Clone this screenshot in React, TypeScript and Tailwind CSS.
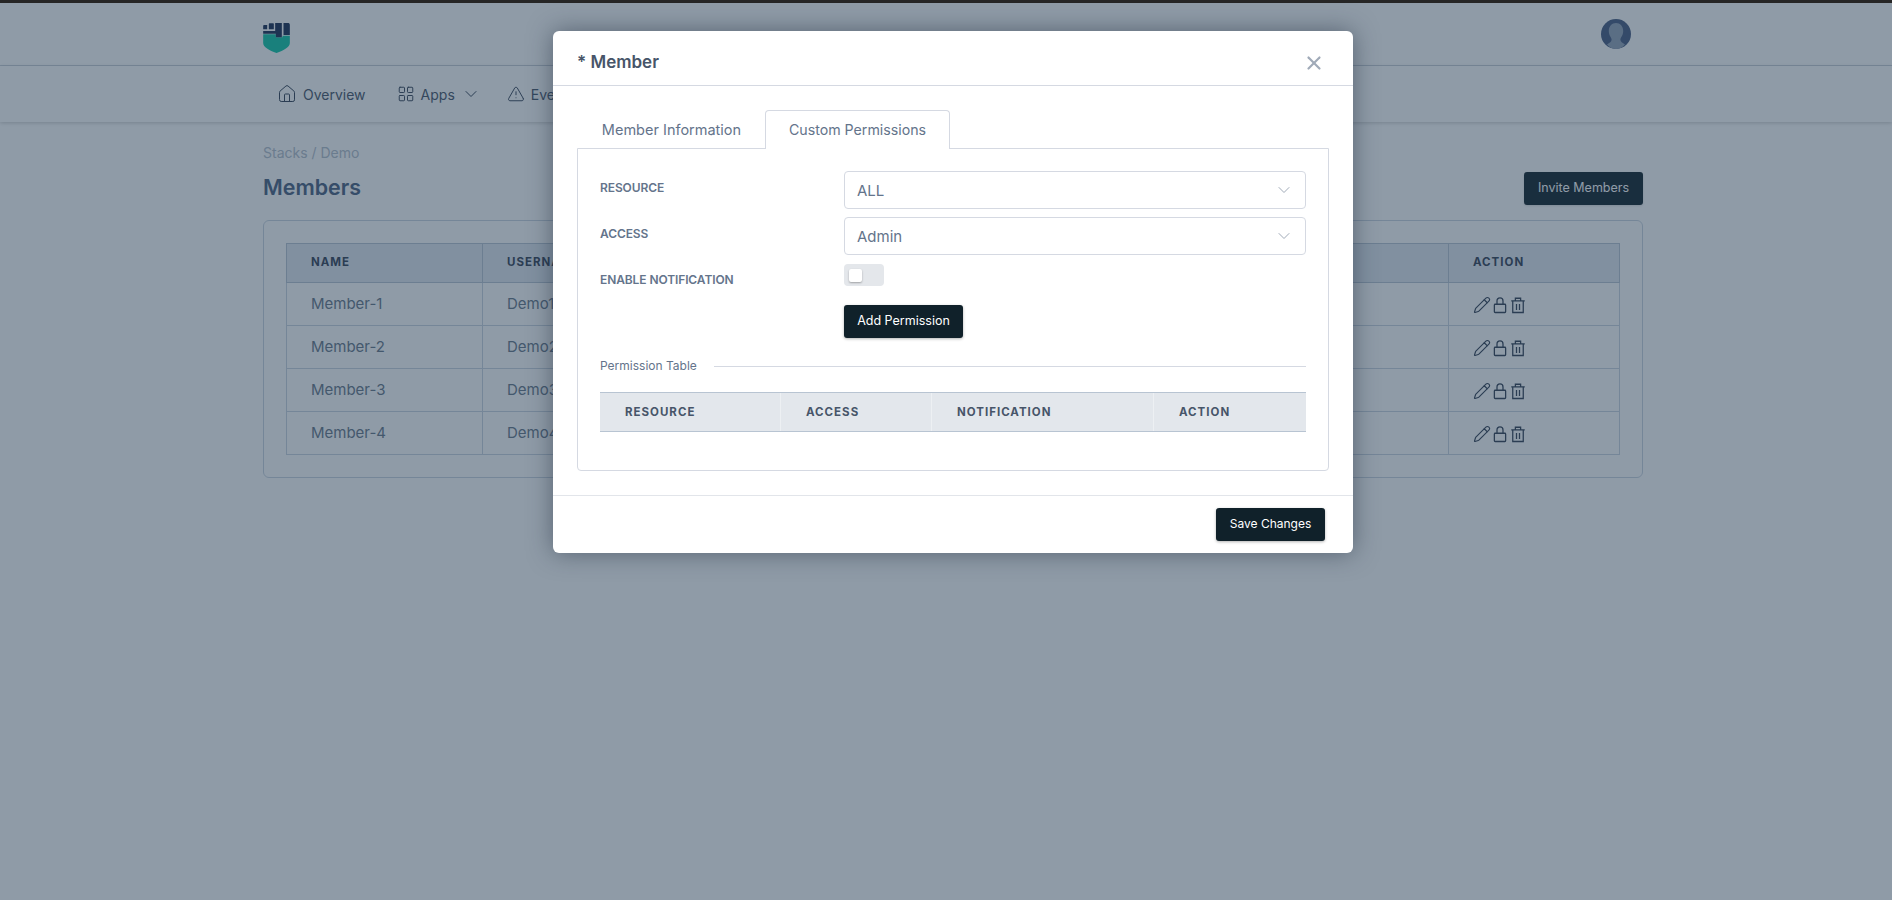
import React from "react";
import { ChevronDown, Home, LayoutGrid, Pencil, TriangleAlert, X } from "lucide-react";

const members = [
  { name: "Member-1", user: "Demo1" },
  { name: "Member-2", user: "Demo2" },
  { name: "Member-3", user: "Demo3" },
  { name: "Member-4", user: "Demo4" },
];

const permissionCols = [
  { label: "RESOURCE", width: "w-[181px]" },
  { label: "ACCESS", width: "w-[151px]" },
  { label: "NOTIFICATION", width: "w-[222px]" },
  { label: "ACTION", width: "w-[152px]" },
];

function Logo() {
  return (
    <svg width="27" height="30" viewBox="0 0 80 90">
      <path d="M0 34H46V24H38V43H58V38H80V60C80 72 62 83 40 90C18 83 0 72 0 60Z" fill="#10c8a8" />
      <path d="M0 9C0 7 2 6 4 6H12V19H0Z" fill="#182c52" />
      <rect x="17" y="1" width="15" height="18" rx="2" fill="#182c52" />
      <path d="M0 24H36V0H56V43H38V32H0Z" fill="#182c52" />
      <path d="M61 0H74C78 0 80 2 80 6V36H61Z" fill="#182c52" />
    </svg>
  );
}

function Avatar() {
  return (
    <svg width="30" height="30" viewBox="0 0 30 30">
      <circle cx="15" cy="15" r="15" fill="#465a80" />
      <path d="M15 4C10.8 4 7.8 7.5 7.8 12C7.8 16.5 10.5 18.5 10.6 20.5C10.7 22.5 8.5 24 6 25.5C8.5 28.5 12 30 15 30C18 30 21.5 28.5 24 25.5C21.5 24 19.3 22.5 19.4 20.5C19.5 18.5 22.2 16.5 22.2 12C22.2 7.5 19.2 4 15 4Z" fill="#94a3b8" />
    </svg>
  );
}

function LockIcon() {
  return (
    <svg width="18" height="18" viewBox="0 0 24 24" fill="none" stroke="currentColor" strokeWidth="1.7">
      <rect x="4.5" y="11" width="15" height="11" rx="1" />
      <path d="M8 11V6.5a4 4 0 0 1 8 0V11" />
    </svg>
  );
}

function TrashIcon() {
  return (
    <svg width="18" height="18" viewBox="0 0 24 24" fill="none" stroke="currentColor" strokeWidth="1.7">
      <path d="M3 6.5H21" />
      <path d="M8.5 6.5V3h7v3.5" />
      <path d="M5 6.5V22h14V6.5" />
      <path d="M10 10.5v8M14 10.5v8" />
    </svg>
  );
}

function SelectField({ value }: { value: string }) {
  return (
    <div className="flex h-[38px] items-center justify-between rounded-[4px] border border-[#d5d9e2] bg-white pl-[12px] pr-[11px] text-[15px] text-[#64748b]">
      <span className="pt-[2px]">{value}</span>
      <ChevronDown size={20} strokeWidth={1.2} className="text-[#a0aab8]" />
    </div>
  );
}

function FieldLabel({ children, top }: { children: React.ReactNode; top: string }) {
  return (
    <div className={`w-[244px] shrink-0 text-[12px] font-semibold leading-[18px] tracking-[-0.1px] text-[#64748b] ${top}`}>
      {children}
    </div>
  );
}

export default function App() {
  return (
    <div className="relative h-[900px] overflow-hidden bg-white font-['Inter',sans-serif]">
      <div className="h-[3px] bg-[#262626]" />

      <header className="flex h-[63px] items-start justify-between border-b border-[#d0d7df] pl-[263px] pr-[261px] pt-[20px]">
        <Logo />
        <div className="-mt-[4px]">
          <Avatar />
        </div>
      </header>

      <nav className="flex h-[56px] items-center gap-[31px] pl-[277px] text-[14px] text-[#475569] shadow-[0_1px_4px_rgba(0,0,0,0.2)]">
        <div className="flex items-center gap-[6px]">
          <Home size={20} strokeWidth={1.2} className="text-[#334155]" />
          <span>Overview</span>
        </div>
        <div className="flex items-center gap-[6px]">
          <LayoutGrid size={18} strokeWidth={1.3} className="text-[#334155]" />
          <span>Apps</span>
          <ChevronDown size={20} strokeWidth={1.2} className="-mr-[5px] text-[#334155]" />
        </div>
        <div className="flex items-center gap-[6px]">
          <TriangleAlert size={18} strokeWidth={1.3} className="text-[#334155]" />
          <span>Events</span>
        </div>
      </nav>

      <main className="ml-[263px] mt-[21px] w-[1380px]">
        <div className="text-[14px] leading-[20px] text-[#b4bfcc]">Stacks / Demo</div>
        <div className="mt-[9px] flex items-start justify-between">
          <h1 className="text-[21.4px] font-semibold leading-[30px] text-[#4a6080]">Members</h1>
          <button className="h-[33px] w-[119px] rounded-[3px] bg-[#10212a] text-[12.5px] text-white shadow-sm">
            Invite Members
          </button>
        </div>

        <div className="mt-[15px] rounded-[6px] border border-[#cbd5e1] p-[22px]">
          <table className="w-full table-fixed border-collapse text-[15px] text-[#677789]">
            <colgroup>
              <col className="w-[196px]" />
              <col />
              <col className="w-[171px]" />
            </colgroup>
            <thead>
              <tr className="h-[39px] bg-[#e2e8f0] text-left text-[11.5px] tracking-[1px] text-[#334155]">
                <th className="border border-[#b8c4d2] pl-[24px] font-bold">NAME</th>
                <th className="border border-[#b8c4d2] pl-[24px] font-bold">USERNAME</th>
                <th className="border border-[#b8c4d2] pl-[24px] font-bold">ACTION</th>
              </tr>
            </thead>
            <tbody>
              {members.map((m) => (
                <tr key={m.name} className="h-[43px]">
                  <td className="border border-[#cbd5e1] pl-[24px]">{m.name}</td>
                  <td className="border border-[#cbd5e1] pl-[24px]">{m.user}</td>
                  <td className="border border-[#cbd5e1] pl-[24px] pt-[2px]">
                    <div className="flex items-center text-[#334155]">
                      <Pencil size={18} strokeWidth={1.5} />
                      <LockIcon />
                      <TrashIcon />
                    </div>
                  </td>
                </tr>
              ))}
            </tbody>
          </table>
        </div>
      </main>

      {/* Backdrop */}
      <div className="absolute inset-x-0 bottom-0 top-[3px] bg-[#243a53]/51" />

      {/* Modal */}
      <div className="absolute left-[553px] top-[31px] w-[800px] rounded-[6px] bg-white shadow-[0_0_24px_rgba(30,41,59,0.5)]">
        <div className="flex h-[55px] items-center justify-between border-b border-[#d5d9e2] pl-[24px] pr-[28px] pt-[9px]">
          <h2 className="text-[17px] font-semibold text-[#475569]">* Member</h2>
          <X size={22} strokeWidth={2.4} className="text-[#a0aab8]" />
        </div>

        <div className="px-[24px] pt-[24px]">
          <div className="relative z-10 flex h-[38px] items-start pl-[1px] text-[14.5px] text-[#64748b]">
            <div className="flex h-[39px] w-[187px] items-center justify-center">Member Information</div>
            <div className="flex h-[39px] w-[185px] items-center justify-center rounded-t-[4px] border border-b-0 border-[#d5d9e2] bg-white text-[14.2px]">
              Custom Permissions
            </div>
          </div>

          <div className="h-[323px] rounded-b-[4px] border border-[#d5d9e2] px-[22px] pt-[22px]">
            <div className="flex items-start">
              <FieldLabel top="mt-[8px]">RESOURCE</FieldLabel>
              <div className="flex-1">
                <SelectField value="ALL" />
              </div>
            </div>
            <div className="mt-[8px] flex items-start">
              <FieldLabel top="mt-[8px]">ACCESS</FieldLabel>
              <div className="flex-1">
                <SelectField value="Admin" />
              </div>
            </div>
            <div className="mt-[9px] flex items-start">
              <FieldLabel top="mt-[7px]">ENABLE NOTIFICATION</FieldLabel>
              <div className="flex h-[22px] w-[40px] items-center rounded-[4px] bg-[#e4e7eb] pl-[5px]">
                <div className="h-[13px] w-[13px] rounded-[2px] bg-white shadow-[0_1px_2px_rgba(0,0,0,0.3)]" />
              </div>
            </div>
            <div className="mt-[16px] pl-[244px]">
              <button className="h-[33px] w-[119px] rounded-[3px] bg-[#10212a] text-[12.5px] text-white shadow-[0_1px_3px_rgba(0,0,0,0.3)]">
                Add Permission
              </button>
            </div>

            <div className="mt-[19px] flex items-center gap-[17px]">
              <span className="text-[12px] leading-[18px] text-[#64748b]">Permission Table</span>
              <div className="h-px flex-1 bg-[#d5d9e2]" />
            </div>

            <div className="mt-[17px] flex h-[40px] border-y border-[#b8c4d2] bg-[#e3e7ec] text-[11.5px] font-bold tracking-[1px] text-[#475569]">
              {permissionCols.map((c, i) => (
                <div
                  key={c.label}
                  className={`flex items-center pl-[25px] pt-px ${c.width} ${i < 3 ? "border-r border-[#edf0f3]" : ""}`}
                >
                  {c.label}
                </div>
              ))}
            </div>
          </div>
        </div>

        <div className="mt-[24px] flex h-[58px] items-start justify-end border-t border-[#e2e5ea] pr-[28px] pt-[12px]">
          <button className="h-[33px] w-[109px] rounded-[3px] bg-[#10212a] pb-px text-[12px] text-white shadow-[0_1px_3px_rgba(0,0,0,0.3)]">
            Save Changes
          </button>
        </div>
      </div>
    </div>
  );
}
